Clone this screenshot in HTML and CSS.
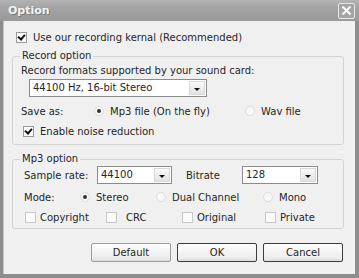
FILE: index.html
```html
<!DOCTYPE html>
<html>

<head>
    <meta charset="utf-8" />
    <title>Option</title>
    <link rel="stylesheet" href="styles.css">
</head>

<body>
    <div class="window">
        <div class="titlebar">
            <span class="title">Option</span>
            <span class="close-btn">
                <svg width="11" height="11" viewBox="0 0 11 11"><path d="M1.5 1.5 L9.5 9.5 M9.5 1.5 L1.5 9.5" stroke="#fff" stroke-width="2" /></svg>
            </span>
        </div>
        <div class="client">
            <label class="check top-check"><span class="box checked"></span>Use our recording kernal (Recommended)</label>

            <div class="group record-group">
                <span class="legend">Record option</span>
                <div class="formats-label">Record formats supported by your sound card:</div>
                <div class="combo formats-combo"><span class="combo-text">44100 Hz, 16-bit Stereo</span><span class="combo-btn"></span></div>
                <div class="row save-row">
                    <span class="row-label save-label">Save as:</span>
                    <label class="radio mp3-opt"><span class="dot checked"></span>Mp3 file (On the fly)</label>
                    <label class="radio"><span class="dot"></span>Wav file</label>
                </div>
                <label class="check noise-check"><span class="box checked"></span>Enable noise reduction</label>
            </div>

            <div class="group mp3-group">
                <span class="legend">Mp3 option</span>
                <div class="row rate-row">
                    <span class="row-label rate-label">Sample rate:</span>
                    <div class="combo small-combo"><span class="combo-text">44100</span><span class="combo-btn"></span></div>
                    <span class="row-label bitrate-label">Bitrate</span>
                    <div class="combo small-combo bitrate-combo"><span class="combo-text">128</span><span class="combo-btn"></span></div>
                </div>
                <div class="row mode-row">
                    <span class="row-label mode-label">Mode:</span>
                    <label class="radio stereo-opt"><span class="dot checked"></span>Stereo</label>
                    <label class="radio dual-opt"><span class="dot"></span>Dual Channel</label>
                    <label class="radio"><span class="dot"></span>Mono</label>
                </div>
                <div class="row flags-row">
                    <label class="check flag copyright"><span class="box"></span>Copyright</label>
                    <label class="check flag crc"><span class="box"></span>CRC</label>
                    <label class="check flag original"><span class="box"></span>Original</label>
                    <label class="check flag"><span class="box"></span>Private</label>
                </div>
            </div>

            <div class="buttons">
                <button class="btn">Default</button>
                <button class="btn dark">OK</button>
                <button class="btn dark">Cancel</button>
            </div>
        </div>
    </div>
</body>

</html>
```

FILE: styles.css
```css
body {
    margin: 0;
    font-family: "DejaVu Sans", Verdana, sans-serif;
    font-size: 10px;
    color: #262626;
}

.window {
    width: 359px;
    height: 278px;
    display: flex;
    flex-direction: column;
    background: #8e8e8e;
}

.titlebar {
    height: 21px;
    flex: none;
    display: flex;
    align-items: center;
    justify-content: space-between;
    padding: 0 4px 0 8px;
    background: linear-gradient(#b4b4b4, #a2a2a2 40%, #9a9a9a);
}

.title {
    font-weight: bold;
    font-size: 11px;
    color: #f2f2f2;
    text-shadow: 1px 1px 0 #7a7a7a;
}

.close-btn {
    width: 15px;
    height: 14px;
    border: 1px solid #e8e8e8;
    border-radius: 2px;
    background: #a4a4a4;
    display: flex;
    align-items: center;
    justify-content: center;
}

.client {
    flex: 1;
    margin: 0 4px 4px 3px;
    background: #f0f0f0;
    border-left: 1px solid #c4c4c4;
    padding: 9px 8px 0 8px;
}

.check,
.radio {
    display: flex;
    align-items: center;
}

.box {
    width: 9px;
    height: 9px;
    border: 1px solid #b4b4b4;
    background: #fbfbfb;
    margin-right: 6px;
    flex: none;
    position: relative;
}

.box.checked {
    border-color: #9a9a9a;
}

.box.checked::after {
    content: "";
    position: absolute;
    left: 2px;
    top: 0px;
    width: 3px;
    height: 5px;
    border: solid #111;
    border-width: 0 2px 2px 0;
    transform: rotate(40deg);
}

.dot {
    width: 8px;
    height: 8px;
    border-radius: 50%;
    border: 1px solid #dcdcdc;
    background: #f8f8f8;
    margin-right: 6px;
    flex: none;
    position: relative;
}

.dot.checked::after {
    content: "";
    position: absolute;
    left: 2px;
    top: 2px;
    width: 4px;
    height: 4px;
    border-radius: 50%;
    background: #333;
}

.top-check {
    margin-left: 4px;
    height: 14px;
}

.group {
    position: relative;
    border: 1px solid #d2d2d2;
    border-radius: 3px;
    margin-right: 3px;
}

.legend {
    position: absolute;
    top: -7px;
    left: 7px;
    padding: 0 2px;
    background: #f0f0f0;
    line-height: 12px;
}

.record-group {
    margin-top: 12px;
    height: 79px;
    padding: 8px 0 0 8px;
}

.formats-label {
    line-height: 12px;
}

.combo {
    display: flex;
    width: 176px;
    height: 16px;
    border: 1px solid #8c8c8c;
    background: #fff;
    margin: 2px 0 0 8px;
}

.combo-text {
    flex: 1;
    padding-left: 3px;
    line-height: 16px;
}

.combo-btn {
    width: 14px;
    margin: 1px;
    background: linear-gradient(#fafafa, #e2e2e2);
    border: 1px solid #d8d8d8;
    position: relative;
}

.combo-btn::after {
    content: "";
    position: absolute;
    left: 4px;
    top: 6px;
    border-left: 3px solid transparent;
    border-right: 3px solid transparent;
    border-top: 3px solid #111;
}

.row {
    display: flex;
    align-items: center;
}

.save-row {
    margin-top: 7px;
    height: 14px;
}

.save-label {
    width: 73px;
}

.mp3-opt {
    width: 151px;
}

.noise-check {
    margin: 6px 0 0 2px;
    height: 14px;
}

.mp3-group {
    margin-top: 14px;
    height: 62px;
    padding: 6px 0 0 11px;
}

.rate-row {
    height: 18px;
}

.rate-label {
    width: 73px;
}

.small-combo {
    width: 73px;
    margin: 0;
}

.bitrate-label {
    margin-left: 14px;
    width: 56px;
}

.bitrate-combo {
    width: 74px;
}

.mode-row {
    margin-top: 6px;
    height: 14px;
}

.mode-label {
    width: 56px;
}

.stereo-opt {
    width: 76px;
}

.dual-opt {
    width: 107px;
}

.flags-row {
    margin-top: 6px;
    height: 14px;
    padding-left: 1px;
}

.flag .box {
    border-color: #c8c8c8;
    margin-right: 4px;
}

.copyright {
    width: 81px;
}

.crc {
    width: 76px;
}

.crc .box {
    margin-right: 9px;
}

.original {
    width: 83px;
}

.buttons {
    display: flex;
    justify-content: flex-end;
    gap: 6px;
    margin-top: 14px;
    padding-right: 4px;
}

.btn {
    width: 80px;
    height: 19px;
    font-family: "DejaVu Sans", Verdana, sans-serif;
    font-size: 10px;
    color: #262626;
    background: linear-gradient(#fdfdfd, #ededed 80%, #dcdcdc);
    border: 1px solid #9c9c9c;
    border-radius: 2px;
    padding: 0;
}

.btn.dark {
    border-color: #3c3c3c;
}
```
